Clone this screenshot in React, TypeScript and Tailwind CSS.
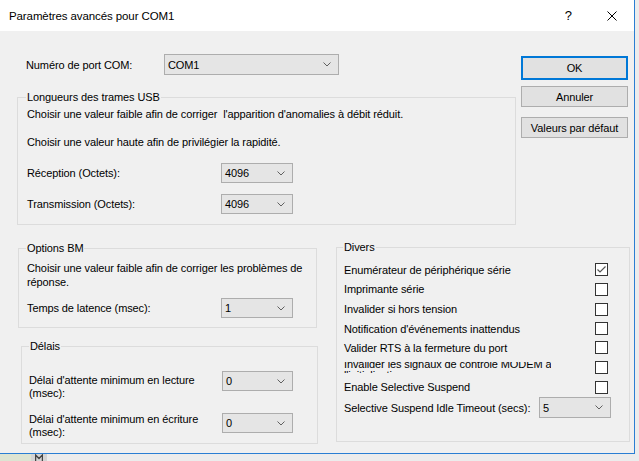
import React from "react";

// Small down-chevron drawn inside every combo box.
function Chevron() {
  return (
    <svg width="8" height="5" viewBox="0 0 8 5" className="shrink-0">
      <polyline points="0.5,0.5 4,4 7.5,0.5" fill="none" stroke="#606060" strokeWidth="1" />
    </svg>
  );
}

function Combo({ value, className }: { value: string; className: string }) {
  return (
    <div
      className={`flex shrink-0 items-center justify-between border border-[#adadad] bg-[#e5e5e5] pl-[3px] pr-[7px] ${className}`}
    >
      <span>{value}</span>
      <Chevron />
    </div>
  );
}

function Group({
  title,
  titleLeft,
  className,
  children,
}: {
  title: string;
  titleLeft: string;
  className: string;
  children: React.ReactNode;
}) {
  return (
    <div className={`relative shrink-0 border border-[#dcdcdc] ${className}`}>
      <span className={`absolute top-[-8px] bg-[#f0f0f0] px-[1px] leading-[14px] ${titleLeft}`}>
        {title}
      </span>
      {children}
    </div>
  );
}

function Check({ checked }: { checked?: boolean }) {
  return (
    <div className="flex h-[13px] w-[13px] shrink-0 items-center justify-center border border-[#333333] bg-white">
      {checked && (
        <svg width="11" height="11" viewBox="0 0 11 11">
          <polyline points="1.5,5.5 4,8 9.5,2.5" fill="none" stroke="#555555" strokeWidth="1.2" />
        </svg>
      )}
    </div>
  );
}

function Button({ label, focused, className }: { label: string; focused?: boolean; className: string }) {
  return (
    <div
      className={`flex w-[107px] items-center justify-center bg-[#e1e1e1] ${
        focused ? "border-2 border-[#0078d7]" : "border border-[#adadad]"
      } ${className}`}
    >
      {label}
    </div>
  );
}

// Divers: row heights are taken from the screenshot, not a uniform step.
const DIVERS = [
  { label: "Enumérateur de périphérique série", h: "h-[19px]", checked: true },
  { label: "Imprimante série", h: "h-[20px]" },
  { label: "Invalider si hors tension", h: "h-[20px]" },
  { label: "Notification d'événements inattendus", h: "h-[19px]" },
  { label: "Valider RTS à la fermeture du port", h: "h-[19px]" },
];

export default function App() {
  return (
    <div className="flex h-[461px] w-[639px] flex-col overflow-hidden bg-[#ececec] font-['Liberation_Sans',Arial,sans-serif] text-[11px] leading-[14px] tracking-[-0.1px] text-black">
      <div className="flex h-[454px] shrink-0">
        <div className="flex h-[454px] w-[635px] flex-col border-b border-r border-[#2a7ed3]">
          {/* title bar */}
          <div className="flex h-[31px] shrink-0 items-center bg-white pl-[9px] pr-[17px] text-[11.5px]">
            <span className="flex-1">Paramètres avancés pour COM1</span>
            <span className="mr-[35px] text-[13px]">?</span>
            <svg width="10" height="10" viewBox="0 0 10 10">
              <path d="M0.5 0.5 L9.5 9.5 M9.5 0.5 L0.5 9.5" stroke="#000" strokeWidth="1" />
            </svg>
          </div>

          <div className="flex-1 bg-[#f0f0f0]">
            {/* top: port + USB lengths, buttons on the right */}
            <div className="flex items-start">
              <div className="ml-[17px] flex w-[499px] flex-col">
                <div className="mt-[23px] flex h-[21px] items-center">
                  <span className="w-[147px] pl-[9px]">Numéro de port COM:</span>
                  <Combo value="COM1" className="h-[21px] w-[175px]" />
                </div>

                <Group title="Longueurs des trames USB" titleLeft="left-[8px]" className="mt-[22px] h-[128px] w-[499px]">
                  <div className="flex flex-col pl-[9px] pt-[9px]">
                    <p className="h-[14px] whitespace-pre">
                      Choisir une valeur faible afin de corriger  l'apparition d'anomalies à débit réduit.
                    </p>
                    <p className="mt-[14px] h-[14px]">Choisir une valeur haute afin de privilégier la rapidité.</p>
                    <div className="mt-[14px] flex h-[20px] items-center">
                      <span className="w-[194px]">Réception (Octets):</span>
                      <Combo value="4096" className="h-[20px] w-[72px]" />
                    </div>
                    <div className="mt-[11px] flex h-[20px] items-center">
                      <span className="w-[194px]">Transmission (Octets):</span>
                      <Combo value="4096" className="h-[20px] w-[72px]" />
                    </div>
                  </div>
                </Group>
              </div>

              <div className="ml-[5px] mt-[25px] flex w-[107px] flex-col">
                <Button label="OK" focused className="h-[24px]" />
                <Button label="Annuler" className="mt-[6px] h-[21px]" />
                <Button label="Valeurs par défaut" className="mt-[10px] h-[21px]" />
              </div>
            </div>

            {/* bottom: BM options + timeouts, misc on the right */}
            <div className="mt-[23px] flex items-start">
              <div className="ml-[18px] flex w-[300px] flex-col">
                <Group title="Options BM" titleLeft="left-[7px]" className="h-[80px] w-[299px]">
                  <div className="flex flex-col pl-[8px] pt-[12px]">
                    <p className="leading-[14px]">
                      Choisir une valeur faible afin de corriger les problèmes de
                      <br />
                      réponse.
                    </p>
                    <div className="mt-[9px] flex h-[20px] items-center">
                      <span className="w-[194px]">Temps de latence (msec):</span>
                      <Combo value="1" className="h-[20px] w-[72px]" />
                    </div>
                  </div>
                </Group>

                <Group title="Délais" titleLeft="left-[7px]" className="ml-[3px] mt-[18px] h-[98px] w-[297px]">
                  <div className="flex flex-col pl-[7px]">
                    <div className="mt-[24px] flex items-start">
                      <span className="w-[193px] pt-[3px] leading-[13px]">
                        Délai d'attente minimum en lecture
                        <br />
                        (msec):
                      </span>
                      <Combo value="0" className="h-[20px] w-[71px]" />
                    </div>
                    <div className="mt-[13px] flex items-start">
                      <span className="w-[193px] leading-[13px]">
                        Délai d'attente minimum en écriture
                        <br />
                        (msec):
                      </span>
                      <Combo value="0" className="h-[20px] w-[71px]" />
                    </div>
                  </div>
                </Group>
              </div>

              <Group title="Divers" titleLeft="left-[6px]" className="ml-[18px] mt-[-1px] h-[195px] w-[294px]">
                <div className="flex flex-col pl-[7px] pr-[21px] pt-[12px]">
                  {DIVERS.map((d) => (
                    <div key={d.label} className={`flex items-center justify-between ${d.h}`}>
                      <span>{d.label}</span>
                      <Check checked={d.checked} />
                    </div>
                  ))}
                  {/* label too tall for its slot: both lines get clipped */}
                  <div className="flex h-[20px] items-center justify-between">
                    <div className="h-[11px] overflow-hidden">
                      <div className="mt-[-3px] whitespace-nowrap leading-[11px]">
                        Invalider les signaux de contrôle MODEM à
                        <br />
                        l'initialisation
                      </div>
                    </div>
                    <Check />
                  </div>
                  <div className="flex h-[20px] items-center justify-between">
                    <span>Enable Selective Suspend</span>
                    <Check />
                  </div>
                  <div className="flex h-[21px] items-center">
                    <span>Selective Suspend Idle Timeout (secs):</span>
                    <Combo value="5" className="ml-auto mr-[-3px] h-[21px] w-[72px]" />
                  </div>
                </div>
              </Group>
            </div>
          </div>
        </div>
        <div className="flex-1 bg-[#ececec]" />
      </div>

      {/* strip of the window behind */}
      <div className="flex h-[7px] shrink-0">
        <div className="w-[31px] bg-[#dde4d2]" />
        <div className="flex w-[16px] justify-center bg-[#d4d4d4]">
          <svg width="8" height="7" viewBox="0 0 8 7">
            <path d="M0.5 7 V1 L4 4.5 L7.5 1 V7" fill="none" stroke="#444" strokeWidth="1.5" />
          </svg>
        </div>
        <div className="flex-1 bg-[#ececec]" />
      </div>
    </div>
  );
}
